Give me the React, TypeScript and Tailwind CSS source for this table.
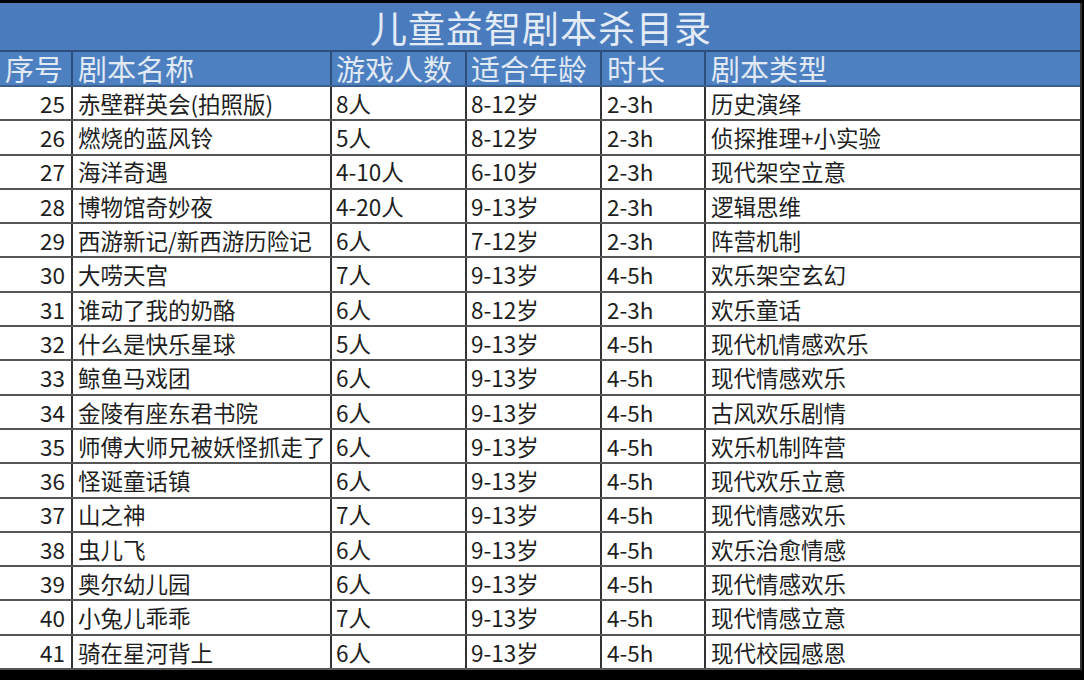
import React from 'react';

const rows = [
  { no: 25, name: '赤壁群英会(拍照版)', players: '8人', age: '8-12岁', time: '2-3h', type: '历史演绎' },
  { no: 26, name: '燃烧的蓝风铃', players: '5人', age: '8-12岁', time: '2-3h', type: '侦探推理+小实验' },
  { no: 27, name: '海洋奇遇', players: '4-10人', age: '6-10岁', time: '2-3h', type: '现代架空立意' },
  { no: 28, name: '博物馆奇妙夜', players: '4-20人', age: '9-13岁', time: '2-3h', type: '逻辑思维' },
  { no: 29, name: '西游新记/新西游历险记', players: '6人', age: '7-12岁', time: '2-3h', type: '阵营机制' },
  { no: 30, name: '大唠天宫', players: '7人', age: '9-13岁', time: '4-5h', type: '欢乐架空玄幻' },
  { no: 31, name: '谁动了我的奶酪', players: '6人', age: '8-12岁', time: '2-3h', type: '欢乐童话' },
  { no: 32, name: '什么是快乐星球', players: '5人', age: '9-13岁', time: '4-5h', type: '现代机情感欢乐' },
  { no: 33, name: '鲸鱼马戏团', players: '6人', age: '9-13岁', time: '4-5h', type: '现代情感欢乐' },
  { no: 34, name: '金陵有座东君书院', players: '6人', age: '9-13岁', time: '4-5h', type: '古风欢乐剧情' },
  { no: 35, name: '师傅大师兄被妖怪抓走了', players: '6人', age: '9-13岁', time: '4-5h', type: '欢乐机制阵营' },
  { no: 36, name: '怪诞童话镇', players: '6人', age: '9-13岁', time: '4-5h', type: '现代欢乐立意' },
  { no: 37, name: '山之神', players: '7人', age: '9-13岁', time: '4-5h', type: '现代情感欢乐' },
  { no: 38, name: '虫儿飞', players: '6人', age: '9-13岁', time: '4-5h', type: '欢乐治愈情感' },
  { no: 39, name: '奥尔幼儿园', players: '6人', age: '9-13岁', time: '4-5h', type: '现代情感欢乐' },
  { no: 40, name: '小兔儿乖乖', players: '7人', age: '9-13岁', time: '4-5h', type: '现代情感立意' },
  { no: 41, name: '骑在星河背上', players: '6人', age: '9-13岁', time: '4-5h', type: '现代校园感恩' },
];

const font = { fontFamily: '"Noto Sans CJK SC", "Noto Sans", sans-serif' };

export default function App() {
  return (
    <div className="w-[1084px] h-[680px] bg-black pt-[3px] overflow-hidden" style={font}>
      <div className="w-[1082px] bg-white border-r-2 border-[#333]">
        {/* Title */}
        <div className="h-[49px] bg-[#4a7cbd] flex items-center justify-center border-b-2 border-[#2c4f7e]">
          <span className="text-[37px] leading-none text-[#e3ebf6] tracking-[1px] pl-[2px] mt-[2px]">儿童益智剧本杀目录</span>
        </div>

        {/* Header */}
        <div className="h-[35px] bg-[#4d80c0] grid grid-cols-[73px_259px_135px_135px_104px_374px] text-[29px] leading-none text-[#e1e9f5] border-b-2 border-[#3c5f8c]">
          <div className="flex items-center pl-[5px] border-r-2 border-[#2c4f7e]">序号</div>
          <div className="flex items-center pl-[5px] border-r-2 border-[#2c4f7e]">剧本名称</div>
          <div className="flex items-center pl-[4px] border-r-2 border-[#2c4f7e]">游戏人数</div>
          <div className="flex items-center pl-[4px] border-r-2 border-[#2c4f7e]">适合年龄</div>
          <div className="flex items-center pl-[5px] border-r-2 border-[#2c4f7e]">时长</div>
          <div className="flex items-center pl-[5px]">剧本类型</div>
        </div>

        {/* Body */}
        {rows.map((r) => (
          <div
            key={r.no}
            className="h-[34.3px] grid grid-cols-[73px_259px_135px_135px_104px_374px] text-[22.5px] leading-none text-[#1e1e1e] border-b-2 border-[#555]"
          >
            <div className="flex items-center justify-end pr-[6px] border-r-2 border-[#333]">{r.no}</div>
            <div className="flex items-center pl-[5px] border-r-2 border-[#333] whitespace-nowrap">{r.name}</div>
            <div className="flex items-center pl-[4px] border-r-2 border-[#333]">{r.players}</div>
            <div className="flex items-center pl-[4px] border-r-2 border-[#333]">{r.age}</div>
            <div className="flex items-center pl-[5px] border-r-2 border-[#333]">{r.time}</div>
            <div className="flex items-center pl-[5px]">{r.type}</div>
          </div>
        ))}
      </div>
    </div>
  );
}
